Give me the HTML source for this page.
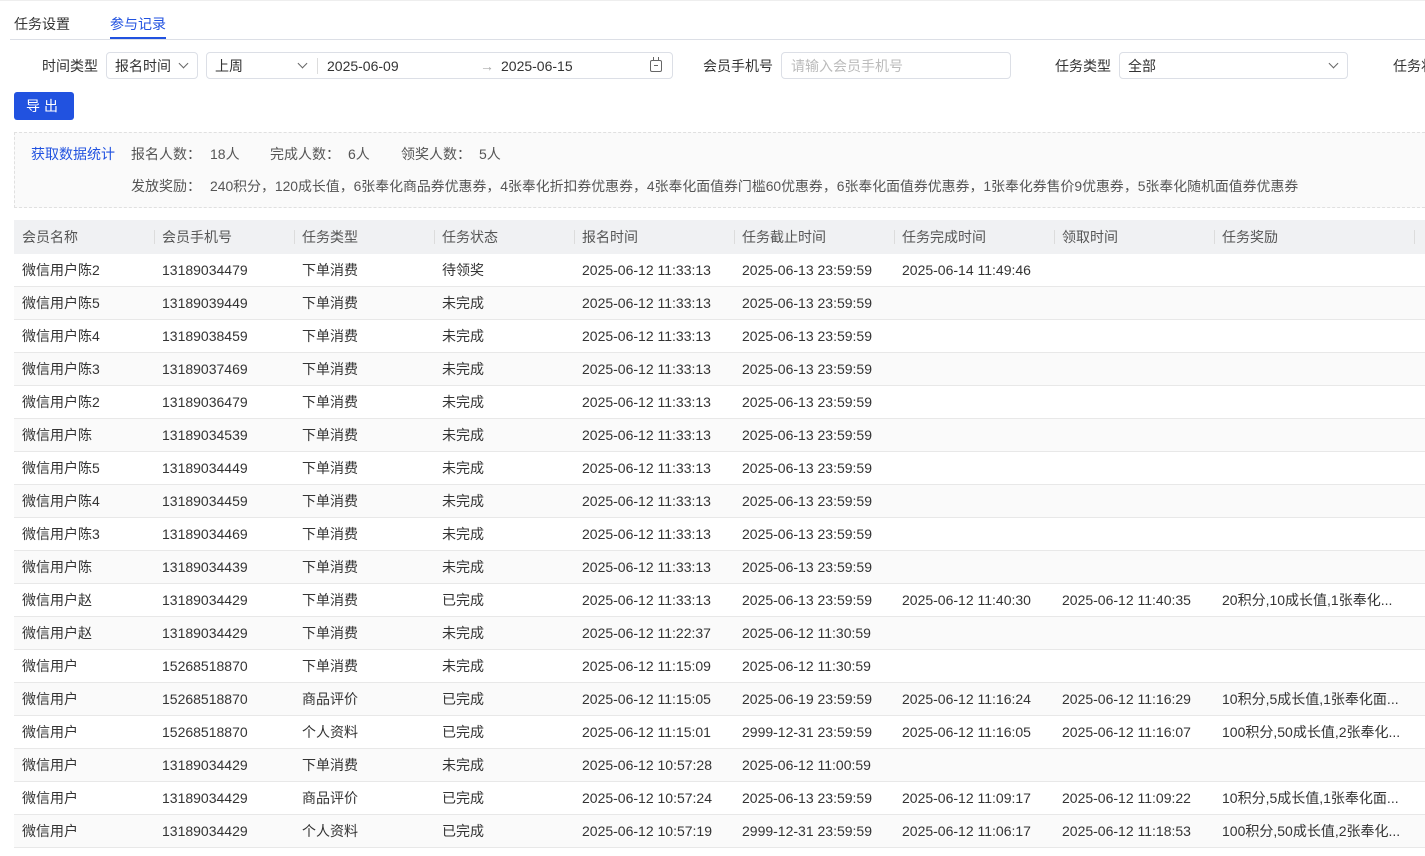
<!DOCTYPE html>
<html><head><meta charset="utf-8"><style>
*{box-sizing:border-box;margin:0;padding:0}
body{width:1425px;height:856px;overflow:hidden;background:#fff;font-family:"Liberation Sans","Noto Sans CJK SC",sans-serif;font-size:14px;line-height:17px;color:#333;position:relative}
.a{position:absolute;white-space:nowrap;line-height:17px}
.box{position:absolute;border:1px solid #dcdfe6;border-radius:4px;background:#fff}
.chev{position:absolute;width:7px;height:7px;border-right:1.3px solid #666;border-bottom:1.3px solid #666;transform:rotate(45deg)}
.row{position:absolute;left:14px;width:1411px;height:33px;border-bottom:1px solid #e8e8e8}
.row span{position:absolute;top:8px;white-space:nowrap;color:#333;line-height:17px}
.hd span{color:#555;top:9px}
.sep{position:absolute;top:10px;width:1px;height:14px;background:#dcdcdc}
</style></head><body>
<div class="a" style="left:0;top:0;width:1425px;height:1px;background:#eee"></div>
<div class="a" style="left:14px;top:16px;color:#333">任务设置</div>
<div class="a" style="left:110px;top:16px;color:#2152e0">参与记录</div>
<div class="a" style="left:10px;top:39px;width:1415px;height:1px;background:#dcdfe6"></div>
<div class="a" style="left:110px;top:37px;width:56px;height:2px;background:#2152e0"></div>

<div class="a" style="left:42px;top:58px">时间类型</div>
<div class="box" style="left:106px;top:52px;width:92px;height:27px"><span class="a" style="left:8px;top:5px">报名时间</span><div class="chev" style="left:73px;top:7px"></div></div>
<div class="box" style="left:206px;top:52px;width:467px;height:27px">
<span class="a" style="left:8px;top:5px">上周</span><div class="chev" style="left:92px;top:7px"></div>
<div class="a" style="left:110px;top:5px;width:1px;height:16px;background:#ddd"></div>
<span class="a" style="left:120px;top:5px">2025-06-09</span>
<span class="a" style="left:273px;top:5px;color:#aaa">→</span>
<span class="a" style="left:294px;top:5px">2025-06-15</span>
<div class="a" style="left:443px;top:7px;width:12px;height:12px;border:1.3px solid #666;border-radius:2px"><div class="a" style="left:3px;top:4px;width:4px;height:1px;background:#666"></div></div>
<div class="a" style="left:446px;top:4px;width:1.3px;height:4px;background:#666"></div><div class="a" style="left:451px;top:4px;width:1.3px;height:4px;background:#666"></div>
</div>
<div class="a" style="left:703px;top:58px">会员手机号</div>
<div class="box" style="left:781px;top:52px;width:230px;height:27px"><span class="a" style="left:9px;top:5px;color:#bbb">请输入会员手机号</span></div>
<div class="a" style="left:1055px;top:58px">任务类型</div>
<div class="box" style="left:1119px;top:52px;width:229px;height:27px"><span class="a" style="left:8px;top:5px">全部</span><div class="chev" style="left:210px;top:7px"></div></div>
<div class="a" style="left:1393px;top:58px">任务状</div>

<div class="a" style="left:14px;top:92px;width:60px;height:28px;background:#2152e0;border-radius:3px;color:#fff;text-align:center;line-height:28px;letter-spacing:4px">导出</div>

<div class="a" style="left:14px;top:132px;width:1411px;height:76px;background:#fafafa;border:1px dashed #e0e0e0;border-right:none"></div>
<div class="a" style="left:31px;top:146px;color:#2152e0">获取数据统计</div>
<div class="a" style="left:131px;top:146px;color:#555">报名人数：</div><div class="a" style="left:210px;top:146px;color:#555">18人</div>
<div class="a" style="left:270px;top:146px;color:#555">完成人数：</div><div class="a" style="left:348px;top:146px;color:#555">6人</div>
<div class="a" style="left:401px;top:146px;color:#555">领奖人数：</div><div class="a" style="left:479px;top:146px;color:#555">5人</div>
<div class="a" style="left:131px;top:178px;color:#555">发放奖励：</div>
<div class="a" style="left:210px;top:178px;color:#555;font-size:13.9px">240积分，120成长值，6张奉化商品券优惠券，4张奉化折扣券优惠券，4张奉化面值券门槛60优惠券，6张奉化面值券优惠券，1张奉化券售价9优惠券，5张奉化随机面值券优惠券</div>

<div class="row hd" style="top:220px;height:34px;background:#f0f1f3;border:none">
<span style="left:8px">会员名称</span><span style="left:148px">会员手机号</span><span style="left:288px">任务类型</span><span style="left:428px">任务状态</span><span style="left:568px">报名时间</span><span style="left:728px">任务截止时间</span><span style="left:888px">任务完成时间</span><span style="left:1048px">领取时间</span><span style="left:1208px">任务奖励</span>
<i class="sep" style="left:140px"></i><i class="sep" style="left:280px"></i><i class="sep" style="left:420px"></i><i class="sep" style="left:560px"></i><i class="sep" style="left:720px"></i><i class="sep" style="left:880px"></i><i class="sep" style="left:1040px"></i><i class="sep" style="left:1200px"></i><i class="sep" style="left:1400px"></i>
</div>

<div class="row" style="top:254px"><span style="left:8px">微信用户陈2</span><span style="left:148px">13189034479</span><span style="left:288px">下单消费</span><span style="left:428px">待领奖</span><span style="left:568px">2025-06-12 11:33:13</span><span style="left:728px">2025-06-13 23:59:59</span><span style="left:888px">2025-06-14 11:49:46</span></div>
<div class="row" style="top:287px;background:#fafafa"><span style="left:8px">微信用户陈5</span><span style="left:148px">13189039449</span><span style="left:288px">下单消费</span><span style="left:428px">未完成</span><span style="left:568px">2025-06-12 11:33:13</span><span style="left:728px">2025-06-13 23:59:59</span></div>
<div class="row" style="top:320px"><span style="left:8px">微信用户陈4</span><span style="left:148px">13189038459</span><span style="left:288px">下单消费</span><span style="left:428px">未完成</span><span style="left:568px">2025-06-12 11:33:13</span><span style="left:728px">2025-06-13 23:59:59</span></div>
<div class="row" style="top:353px;background:#fafafa"><span style="left:8px">微信用户陈3</span><span style="left:148px">13189037469</span><span style="left:288px">下单消费</span><span style="left:428px">未完成</span><span style="left:568px">2025-06-12 11:33:13</span><span style="left:728px">2025-06-13 23:59:59</span></div>
<div class="row" style="top:386px"><span style="left:8px">微信用户陈2</span><span style="left:148px">13189036479</span><span style="left:288px">下单消费</span><span style="left:428px">未完成</span><span style="left:568px">2025-06-12 11:33:13</span><span style="left:728px">2025-06-13 23:59:59</span></div>
<div class="row" style="top:419px;background:#fafafa"><span style="left:8px">微信用户陈</span><span style="left:148px">13189034539</span><span style="left:288px">下单消费</span><span style="left:428px">未完成</span><span style="left:568px">2025-06-12 11:33:13</span><span style="left:728px">2025-06-13 23:59:59</span></div>
<div class="row" style="top:452px"><span style="left:8px">微信用户陈5</span><span style="left:148px">13189034449</span><span style="left:288px">下单消费</span><span style="left:428px">未完成</span><span style="left:568px">2025-06-12 11:33:13</span><span style="left:728px">2025-06-13 23:59:59</span></div>
<div class="row" style="top:485px;background:#fafafa"><span style="left:8px">微信用户陈4</span><span style="left:148px">13189034459</span><span style="left:288px">下单消费</span><span style="left:428px">未完成</span><span style="left:568px">2025-06-12 11:33:13</span><span style="left:728px">2025-06-13 23:59:59</span></div>
<div class="row" style="top:518px"><span style="left:8px">微信用户陈3</span><span style="left:148px">13189034469</span><span style="left:288px">下单消费</span><span style="left:428px">未完成</span><span style="left:568px">2025-06-12 11:33:13</span><span style="left:728px">2025-06-13 23:59:59</span></div>
<div class="row" style="top:551px;background:#fafafa"><span style="left:8px">微信用户陈</span><span style="left:148px">13189034439</span><span style="left:288px">下单消费</span><span style="left:428px">未完成</span><span style="left:568px">2025-06-12 11:33:13</span><span style="left:728px">2025-06-13 23:59:59</span></div>
<div class="row" style="top:584px"><span style="left:8px">微信用户赵</span><span style="left:148px">13189034429</span><span style="left:288px">下单消费</span><span style="left:428px">已完成</span><span style="left:568px">2025-06-12 11:33:13</span><span style="left:728px">2025-06-13 23:59:59</span><span style="left:888px">2025-06-12 11:40:30</span><span style="left:1048px">2025-06-12 11:40:35</span><span style="left:1208px">20积分,10成长值,1张奉化...</span></div>
<div class="row" style="top:617px;background:#fafafa"><span style="left:8px">微信用户赵</span><span style="left:148px">13189034429</span><span style="left:288px">下单消费</span><span style="left:428px">未完成</span><span style="left:568px">2025-06-12 11:22:37</span><span style="left:728px">2025-06-12 11:30:59</span></div>
<div class="row" style="top:650px"><span style="left:8px">微信用户</span><span style="left:148px">15268518870</span><span style="left:288px">下单消费</span><span style="left:428px">未完成</span><span style="left:568px">2025-06-12 11:15:09</span><span style="left:728px">2025-06-12 11:30:59</span></div>
<div class="row" style="top:683px;background:#fafafa"><span style="left:8px">微信用户</span><span style="left:148px">15268518870</span><span style="left:288px">商品评价</span><span style="left:428px">已完成</span><span style="left:568px">2025-06-12 11:15:05</span><span style="left:728px">2025-06-19 23:59:59</span><span style="left:888px">2025-06-12 11:16:24</span><span style="left:1048px">2025-06-12 11:16:29</span><span style="left:1208px">10积分,5成长值,1张奉化面...</span></div>
<div class="row" style="top:716px"><span style="left:8px">微信用户</span><span style="left:148px">15268518870</span><span style="left:288px">个人资料</span><span style="left:428px">已完成</span><span style="left:568px">2025-06-12 11:15:01</span><span style="left:728px">2999-12-31 23:59:59</span><span style="left:888px">2025-06-12 11:16:05</span><span style="left:1048px">2025-06-12 11:16:07</span><span style="left:1208px">100积分,50成长值,2张奉化...</span></div>
<div class="row" style="top:749px;background:#fafafa"><span style="left:8px">微信用户</span><span style="left:148px">13189034429</span><span style="left:288px">下单消费</span><span style="left:428px">未完成</span><span style="left:568px">2025-06-12 10:57:28</span><span style="left:728px">2025-06-12 11:00:59</span></div>
<div class="row" style="top:782px"><span style="left:8px">微信用户</span><span style="left:148px">13189034429</span><span style="left:288px">商品评价</span><span style="left:428px">已完成</span><span style="left:568px">2025-06-12 10:57:24</span><span style="left:728px">2025-06-13 23:59:59</span><span style="left:888px">2025-06-12 11:09:17</span><span style="left:1048px">2025-06-12 11:09:22</span><span style="left:1208px">10积分,5成长值,1张奉化面...</span></div>
<div class="row" style="top:815px;background:#fafafa"><span style="left:8px">微信用户</span><span style="left:148px">13189034429</span><span style="left:288px">个人资料</span><span style="left:428px">已完成</span><span style="left:568px">2025-06-12 10:57:19</span><span style="left:728px">2999-12-31 23:59:59</span><span style="left:888px">2025-06-12 11:06:17</span><span style="left:1048px">2025-06-12 11:18:53</span><span style="left:1208px">100积分,50成长值,2张奉化...</span></div>
</body></html>
